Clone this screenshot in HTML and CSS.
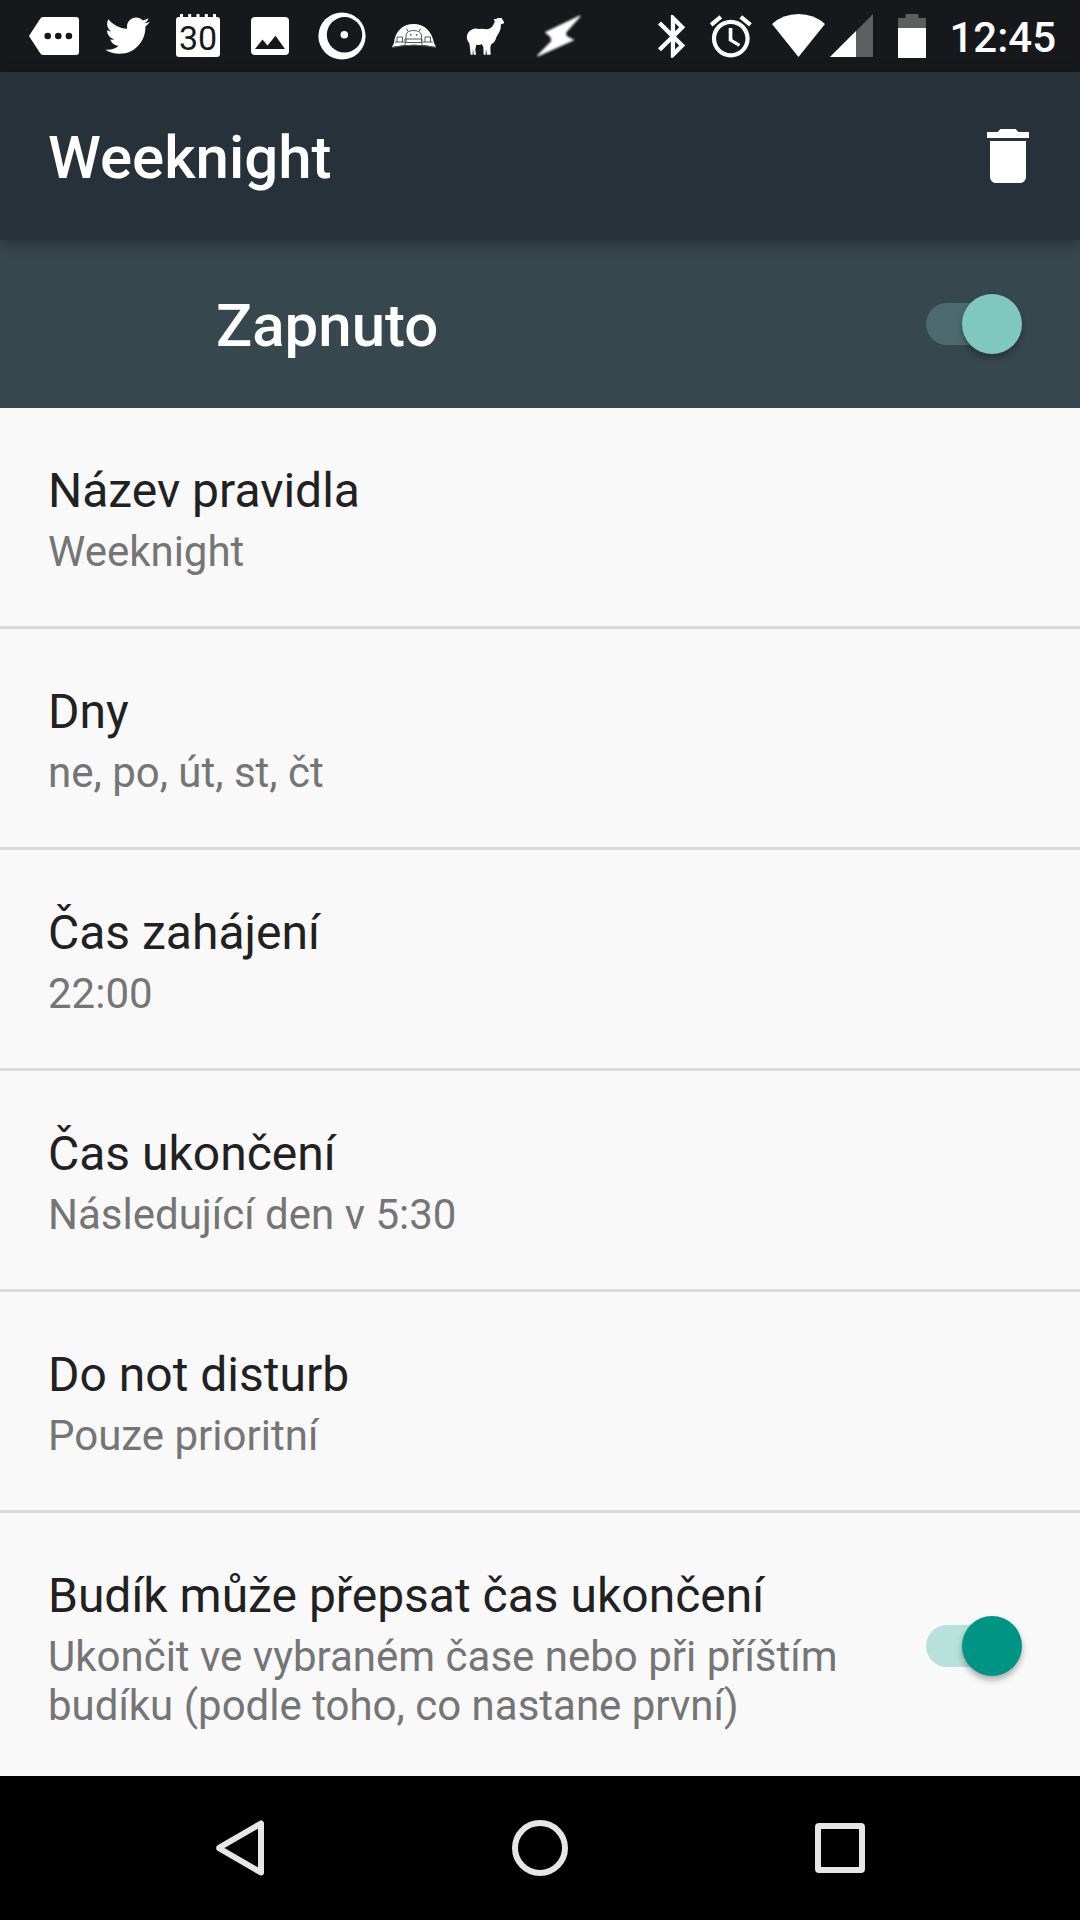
FILE: index.html
```html
<!DOCTYPE html>
<html lang="cs">
<head>
<meta charset="utf-8">
<meta name="viewport" content="width=device-width, initial-scale=1">
<title>Weeknight</title>
<link rel="stylesheet" href="styles.css">
</head>
<body>
<div class="screen">
  <div class="status-bar">
    <div class="notifications">
      <svg class="icon" viewBox="0 0 72 72" aria-hidden="true"><path fill="#fff" d="M25 17H58q3 0 3 3V52q0 3-3 3H25q-2 0-3-2L11 36 22 19q1-2 3-2z"/><g fill="#17181c"><circle cx="29.700" cy="36" r="3.300"/><circle cx="40.300" cy="36" r="3.300"/><circle cx="50.900" cy="36" r="3.300"/></g></svg>
      <svg class="icon" viewBox="0 0 72 72" aria-hidden="true"><path fill="#fff" transform="translate(15.300 13.300) scale(1.860)" d="M23.954 4.569c-.885.389-1.83.654-2.825.775 1.014-.611 1.794-1.574 2.163-2.723-.951.555-2.005.959-3.127 1.184-.896-.959-2.173-1.559-3.591-1.559-2.717 0-4.92 2.203-4.92 4.917 0 .39.045.765.127 1.124C7.691 8.094 4.066 6.13 1.64 3.161c-.427.722-.666 1.561-.666 2.475 0 1.71.87 3.213 2.188 4.096-.807-.026-1.566-.248-2.228-.616v.061c0 2.385 1.693 4.374 3.946 4.827-.413.111-.849.171-1.296.171-.314 0-.615-.03-.916-.086.631 1.953 2.445 3.377 4.604 3.417-1.68 1.319-3.809 2.105-6.102 2.105-.39 0-.779-.023-1.17-.067 2.189 1.394 4.768 2.209 7.557 2.209 9.054 0 13.999-7.496 13.999-13.986 0-.209 0-.42-.015-.63.961-.689 1.8-1.56 2.46-2.548l-.047-.02z"/></svg>
      <svg class="icon" viewBox="0 0 72 72" aria-label="30"><path fill="#fff" d="M17 17h1v-3h3v3h5.200v-3h3v3h5.300v-3h3v3h5.300v-3h3v3h5.200v-3h3v3h1q3 0 3 3v34q0 3-3 3H17q-3 0-3-3V20q0-3 3-3z"/><text class="date" x="36" y="50" text-anchor="middle">30</text></svg>
      <svg class="icon" viewBox="0 0 72 72" aria-hidden="true"><rect x="17" y="17" width="38" height="38" rx="4" fill="#fff"/><path fill="#17181c" d="M21 49l7.500-9.500 5 6 8-9.800L51 49z"/></svg>
      <svg class="icon" viewBox="0 0 72 72" aria-hidden="true"><circle cx="36" cy="36" r="23.600" fill="#fff"/><circle cx="38.500" cy="34.800" r="17.700" fill="#17181c"/><circle cx="38.300" cy="34.700" r="3.800" fill="#fff"/></svg>
      <svg class="icon" viewBox="0 0 72 72" aria-hidden="true"><path fill="#fff" d="M16 43C17 31 25 24 35.500 24S54 31 56 43l2 4q-22-4.500-44 0z"/><g fill="none" stroke="#55565a" stroke-width="1"><path d="M14 47.500q22-4.500 44 0M28 43v-8q1-4.500 7.500-4.500T43.500 35v8M30 31.500l-1.500-3M41 31.500l1.500-3M27 39h17M27 42.500h17M27 39v6M44 39v6M17 42h9M45 42h9.500M19 42v-5h5.500v5M47 42v-5h5.500v5"/></g><path fill="#55565a" d="M32 34h1.500v1.500H32zM38 34h1.500v1.500H38z"/></svg>
      <svg class="icon" viewBox="0 0 72 72" aria-hidden="true"><path fill="#fff" transform="translate(-150 0) scale(.3333)" d="M581 57l8 0 4-3h12l2 4 5 8v4l-9 3q0 14-5 23l-9 16q-2 14-15 21l-3 9 1 22h-11l-3-18-1 18h-6l-1-23-4-8q-9 3-17 1l-3 14 2 16h-7l-2-19-1 19h-6l-2-20-2-14q-9-10-7-22 2-14 14-19 9-5 22-2 13-2 22 1 13-1 19-10l6-11-1-7z"/></svg>
      <svg class="icon soft" viewBox="0 0 72 72" aria-hidden="true"><path fill="#fff" transform="translate(-222 0) scale(.3333)" d="M840 48L796 98l3 12 20 10-106 48 43-44-3-14-15-13z" stroke="#fff" stroke-width="4"/></svg>
    </div>
    <div class="system">
      <svg class="icon narrow" viewBox="0 0 60 72" aria-hidden="true"><path fill="#fff" transform="translate(6.300 10.700) scale(2.140)" d="M17.710 7.710L12 2h-1v7.590L6.410 5 5 6.410 10.590 12 5 17.590 6.410 19 11 14.410V22h1l5.710-5.710-4.300-4.290 4.300-4.290zM13 5.830l1.880 1.880L13 9.590V5.830zm1.880 10.460L13 18.170v-3.760l1.880 1.880z"/></svg>
      <svg class="icon narrow" viewBox="0 0 60 72" aria-hidden="true"><path fill="#fff" transform="translate(4.600 11.300) scale(2.100)" d="M22 5.720l-4.600-3.860-1.290 1.530 4.600 3.860L22 5.720zM7.880 3.390L6.600 1.860 2 5.710l1.290 1.530 4.590-3.850zM12.500 8H11v6l4.750 2.850.75-1.230-3.750-2.370V8zM12 4c-4.970 0-9 4.030-9 9s4.020 9 9 9c4.970 0 9-4.030 9-9s-4.030-9-9-9zm0 16c-3.870 0-7-3.130-7-7s3.130-7 7-7 7 3.130 7 7-3.130 7-7 7z"/></svg>
      <svg class="icon wifi" viewBox="0 0 66 72" aria-hidden="true"><path fill="#fff" d="M37.500 57L11 24Q22 14 37.500 14T64 24z"/></svg>
      <svg class="icon signal" viewBox="0 0 54 72" aria-hidden="true"><path fill="#5d5e60" d="M3 57L46 14v43z"/><path fill="#fff" d="M3 57l26-26v26z"/></svg>
      <svg class="icon narrow" viewBox="0 0 60 72" aria-hidden="true"><path fill="#5d5e60" d="M17 29V18h7.500v-4h13v4H45v11z"/><path fill="#fff" d="M17 28h28v30H17z"/></svg>
      <time class="clock">12:45</time>
    </div>
  </div>

  <header class="app-bar">
    <h1 class="app-title">Weeknight</h1>
    <button class="delete" type="button" aria-label="Smazat">
      <svg class="icon" viewBox="0 0 24 24" aria-hidden="true"><path fill="#fff" d="M6 19c0 1.100.9 2 2 2h8c1.100 0 2-.9 2-2V7H6v12zM19 4h-3.500l-1-1h-5l-1 1H5v2h14V4z"/></svg>
    </button>
  </header>

  <div class="switch-bar">
    <label class="switch-label" for="enabled">Zapnuto</label>
    <input class="switch" type="checkbox" id="enabled" checked>
  </div>

  <main class="list">
    <button class="row" type="button"><span class="name">Název pravidla</span><span class="value">Weeknight</span></button>
    <button class="row" type="button"><span class="name">Dny</span><span class="value">ne, po, út, st, čt</span></button>
    <button class="row" type="button"><span class="name">Čas zahájení</span><span class="value">22:00</span></button>
    <button class="row" type="button"><span class="name">Čas ukončení</span><span class="value">Následující den v 5:30</span></button>
    <button class="row" type="button"><span class="name">Do not disturb</span><span class="value">Pouze prioritní</span></button>
    <div class="row with-switch">
      <label class="row-text" for="alarm"><span class="name">Budík může přepsat čas ukončení</span><span class="value">Ukončit ve vybraném čase nebo při příštím budíku (podle toho, co nastane první)</span></label>
      <input class="switch accent" type="checkbox" id="alarm" checked>
    </div>
  </main>

  <nav class="nav-bar">
    <button class="nav-button" type="button" aria-label="Zpět"><svg class="icon" viewBox="0 0 72 72" aria-hidden="true"><path fill="none" stroke="#e6e6e6" stroke-width="6" stroke-linejoin="round" d="M57 11.500v49L15.500 36.500q-.8-.5 0-1z"/></svg></button>
    <button class="nav-button" type="button" aria-label="Domů"><svg class="icon" viewBox="0 0 72 72" aria-hidden="true"><circle cx="36" cy="36" r="25" fill="none" stroke="#e6e6e6" stroke-width="6"/></svg></button>
    <button class="nav-button" type="button" aria-label="Přehled"><svg class="icon" viewBox="0 0 72 72" aria-hidden="true"><rect x="14" y="14" width="44" height="44" rx="1" fill="none" stroke="#e6e6e6" stroke-width="6"/></svg></button>
  </nav>
</div>
</body>
</html>
```
FILE: styles.css
```css
* {
  box-sizing: border-box;
}

body {
  margin: 0;
  font-family: Roboto, "Noto Sans", sans-serif;
  background: #f9f9f9;
  color: #212121;
}

button {
  margin: 0;
  padding: 0;
  border: 0;
  background: none;
  font: inherit;
  color: inherit;
  text-align: left;
}

.screen {
  display: flex;
  flex-direction: column;
  min-height: 100vh;
}

.icon {
  display: block;
  flex: none;
  width: 72px;
  height: 72px;
}

.narrow {
  width: 60px;
}

.wifi {
  width: 66px;
}

.signal {
  width: 54px;
}

.soft {
  filter: blur(1px);
}

.date {
  font-size: 34px;
  font-weight: 400;
  fill: #17181c;
}

.status-bar {
  display: flex;
  justify-content: space-between;
  height: 72px;
  padding: 0 24px 0 18px;
  background: #17181c;
  color: #fff;
}

.notifications,
.system {
  display: flex;
  align-items: center;
}

.clock {
  margin-left: 8px;
  padding-top: 4px;
  font-size: 42px;
  font-weight: 500;
  line-height: 56px;
}

.app-bar {
  position: relative;
  display: flex;
  align-items: center;
  justify-content: space-between;
  height: 168px;
  padding: 0 36px 0 48px;
  background: #27313a;
  color: #fff;
  box-shadow: 0 4px 12px rgba(0, 0, 0, 0.3);
}

.app-title,
.switch-label {
  margin: 0;
  padding-top: 4px;
  font-size: 60px;
  font-weight: 500;
  line-height: 72px;
}

.switch-bar {
  display: flex;
  align-items: center;
  justify-content: space-between;
  height: 168px;
  padding: 0 58px 0 216px;
  background: #37474e;
  color: #fff;
}

.switch {
  display: grid;
  flex: none;
  align-items: center;
  width: 96px;
  height: 60px;
  margin: 0;
  appearance: none;
}

.switch::before,
.switch::after {
  grid-area: 1 / 1;
  content: "";
}

.switch::before {
  width: 84px;
  height: 42px;
  border-radius: 21px;
  background: #4d6b6e;
}

.switch::after {
  justify-self: end;
  width: 60px;
  height: 60px;
  border-radius: 50%;
  background: #80c7c0;
  box-shadow: 0 4px 6px rgba(0, 0, 0, 0.3);
}

.accent::before {
  background: #b8e1dc;
}

.accent::after {
  background: #009485;
}

.list {
  display: flex;
  flex: 1;
  flex-direction: column;
}

.row {
  display: flex;
  flex-direction: column;
  min-height: 221px;
  padding: 55px 58px 46px 48px;
  border-bottom: 3px solid #dadada;
}

.with-switch {
  flex-direction: row;
  align-items: center;
  justify-content: space-between;
  gap: 48px;
  border-bottom: 0;
}

.row-text {
  display: flex;
  flex-direction: column;
}

.with-switch .switch {
  align-self: flex-start;
  margin-top: 48px;
}

.name {
  margin-bottom: 8px;
  font-size: 48px;
  line-height: 56px;
}

.value {
  font-size: 42px;
  line-height: 49px;
  color: #757575;
}

.nav-bar {
  display: grid;
  grid-template-columns: repeat(3, 1fr);
  height: 144px;
  padding: 0 90px;
  background: #000;
}

.nav-button {
  display: flex;
  align-items: center;
  justify-content: center;
}
```
